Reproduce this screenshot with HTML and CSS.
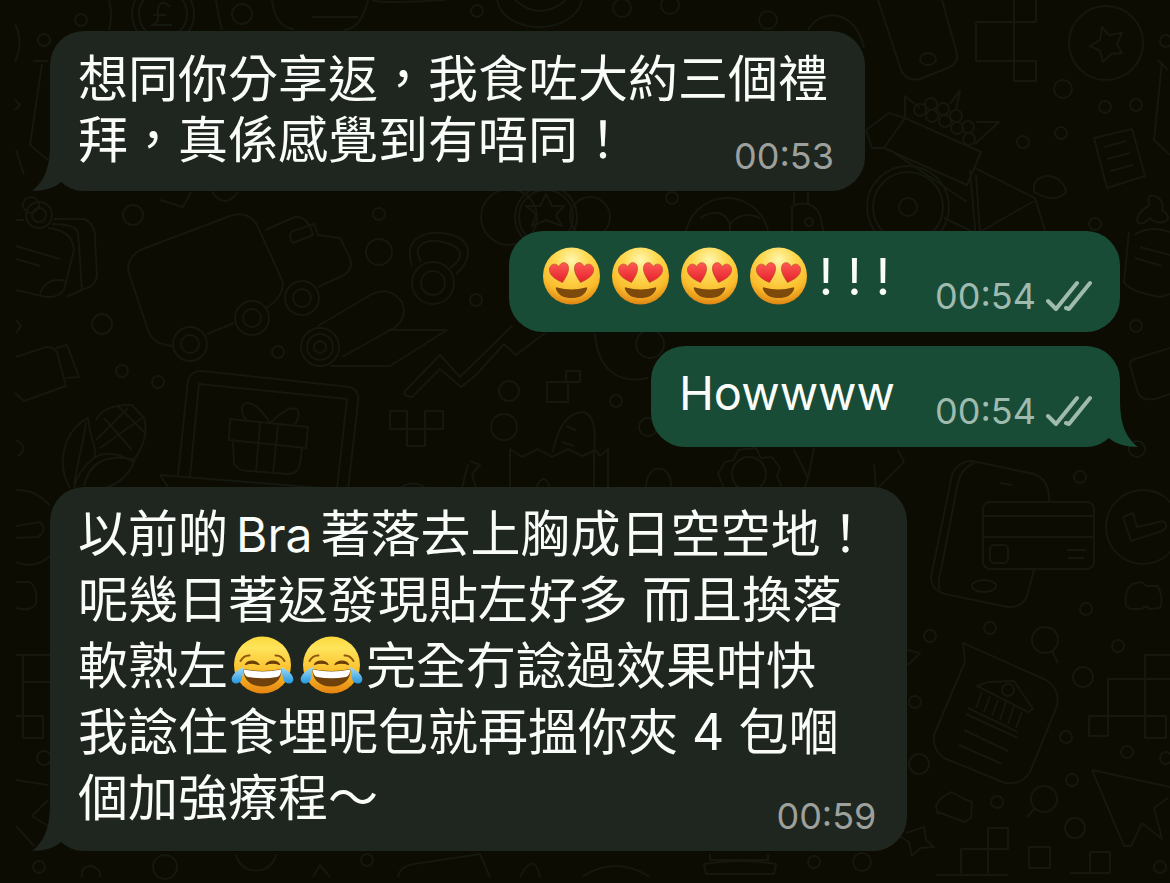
FILE: index.html
```html
<!DOCTYPE html>
<html lang="zh-Hant">
<head>
<meta charset="utf-8">
<meta name="viewport" content="width=device-width, initial-scale=1">
<title>Chat</title>
<link rel="stylesheet" href="styles.css">
</head>
<body>
<svg class="defs" width="0" height="0" aria-hidden="true">
  <defs>
    <radialGradient id="face" cx="50%" cy="22%" r="78%">
      <stop offset="0" stop-color="#fff6b0"/><stop offset=".35" stop-color="#fedb55"/><stop offset=".75" stop-color="#fabb2a"/><stop offset="1" stop-color="#dd8413"/>
    </radialGradient>
    <linearGradient id="faceJoy" x1="0" y1="0" x2="0" y2="1">
      <stop offset="0" stop-color="#fbd83c"/><stop offset=".2" stop-color="#fee45c"/><stop offset=".6" stop-color="#fbc02c"/><stop offset="1" stop-color="#e5830f"/>
    </linearGradient>
    <linearGradient id="heart" x1="0" y1="0" x2="0" y2="1">
      <stop offset="0" stop-color="#ff5a55"/><stop offset="1" stop-color="#e3202a"/>
    </linearGradient>
    <linearGradient id="tear" x1="0" y1="0" x2="0" y2="1">
      <stop offset="0" stop-color="#a5dcf5"/><stop offset="1" stop-color="#2497df"/>
    </linearGradient>
    <symbol id="emoji-love" viewBox="0 0 69 60">
      <circle cx="34.500" cy="30" r="28.500" fill="url(#face)"/>
      <path d="M25.500 36.500 C17 33 11.500 28 12.500 22.500 C13.500 17.500 19.500 16.500 22 21 C23 16 29 15 31 19.500 C33 25 29 31 25.500 36.500Z" fill="url(#heart)" stroke="#b94a24" stroke-width=".7"/>
      <path d="M43.500 36.500 C52 33 57.500 28 56.500 22.500 C55.500 17.500 49.500 16.500 47 21 C46 16 40 15 38 19.500 C36 25 40 31 43.500 36.500Z" fill="url(#heart)" stroke="#b94a24" stroke-width=".7"/>
      <path d="M20 41.500 Q34.500 45.500 49 41.500 C50 41 50.500 42 50 43.500 C47 50 42 52 34.500 52 C27 52 22 50 19 43.500 C18.500 42 19 41 20 41.500Z" fill="#7d4a0c"/>
    </symbol>
    <symbol id="emoji-joy" viewBox="0 0 69 60">
      <circle cx="34.500" cy="30" r="28.500" fill="url(#faceJoy)"/>
      <path d="M12.500 26 Q16 20 21.500 20.500 M56.500 26 Q53 20 47.500 20.500" fill="none" stroke="#8f570b" stroke-width="2" stroke-linecap="round"/>
      <path d="M17.500 29.500 C20 25 28 25 31 29.500 C27 27.800 22 27.800 17.500 29.500Z M51.500 29.500 C49 25 41 25 38 29.500 C42 27.800 47 27.800 51.500 29.500Z" fill="#6b3d06" stroke="#6b3d06" stroke-width="1.300" stroke-linejoin="round"/>
      <path d="M15.500 34 Q34.500 38 53.500 34 C54 44 47 51.500 34.500 51.500 C22 51.500 15 44 15.500 34Z" fill="#70410b"/>
      <path d="M16 34.500 Q34.500 38.500 53 34.500 Q53.500 40.500 49 42 Q34.500 44.500 20 42 Q15.500 40.500 16 34.500Z" fill="#fff"/>
      <path d="M16 32 C9 35 2 41 4 46 C6 50 12 49 13.500 45 C15 41 15 36 16 32Z M53 32 C60 35 67 41 65 46 C63 50 57 49 55.500 45 C54 41 54 36 53 32Z" fill="url(#tear)"/>
    </symbol>
    <symbol id="tail" viewBox="0 0 52 48">
      <path d="M18 0 C18 22 14 37 0 48 C11 48 23 45 29 39 L52 14 V0Z"/>
    </symbol>
    <symbol id="ticks" viewBox="0 0 46 32">
      <path d="M2 21 L10 29 L31 3 M20 28 L23 29 L44 3" fill="none" stroke="currentColor" stroke-width="4" stroke-linecap="round" stroke-linejoin="round"/>
    </symbol>
  </defs>
</svg>

<main class="chat">
  <svg class="wallpaper" viewBox="0 0 1170 883" preserveAspectRatio="xMidYMid slice" aria-hidden="true">
    <!-- coins, phone and blocks along the top -->
    <circle cx="163" cy="14" r="31"/><circle cx="163" cy="14" r="24"/><path d="M170 7 Q162 -2 158 8 V18 Q158 24 152 25 H172 M153 15 H166"/>
    <circle cx="81" cy="20" r="6"/><circle cx="44" cy="40" r="6"/><circle cx="242" cy="14" r="10"/><path d="M109 0 Q113 16 109 30 M216 0 Q218 16 222 30"/>
    <path d="M272 0 C274 18 282 28 294 29 M312 17 H358 M368 0 C364 18 356 29 344 30 M372 0 Q380 4 445 0"/>
    <circle cx="477" cy="11" r="6"/><path d="M497 0 C504 36 574 36 582 0 M515 0 Q540 22 566 0"/>
    <circle cx="622" cy="8" r="9"/><circle cx="670" cy="5" r="9"/><circle cx="768" cy="20" r="9"/><path d="M808 30 C820 8 855 8 864 48"/>
    <path d="M878 0 L901 70 Q906 82 920 79 L950 67 Q960 62 956 50 L942 0"/><ellipse cx="928" cy="59" rx="8" ry="6"/>
    <path d="M976 22 H1036 V0 M976 22 V61 H1036 V81 H1014 V0"/>
    <circle cx="1106" cy="43" r="37"/><path d="M1102 27 L1109 35 L1122 33 L1117 44 L1122 53 L1111 54 L1103 62 L1100 51 L1090 46 L1100 40Z"/>
    <circle cx="1063" cy="89" r="9"/><circle cx="1105" cy="107" r="6"/><circle cx="1136" cy="105" r="6"/><circle cx="1061" cy="133" r="6"/><circle cx="1023" cy="142" r="6"/><circle cx="1166" cy="41" r="6"/>
    <path d="M1158 60 L1168 70 M1162 62 L1154 140 L1170 155"/>
    <path d="M1094 138 L1132 129 L1145 176 L1107 188Z M1104 147 L1126 141 M1107 159 L1130 153 M1110 171 L1133 165"/>
    <!-- bicycle with a fruit basket -->
    <circle cx="908" cy="207" r="41"/><circle cx="908" cy="207" r="35"/><circle cx="908" cy="207" r="9"/>
    <path d="M905 118 L981 152 L967 185 L884 148Z M905 118 L889 113 L866 130 L872 148 L884 148 M890 150 L967 202 M975 168 L1035 198 M976 175 L980 232 L1034 201 M970 170 L976 240 M944 218 L990 240 M1035 198 L1048 240 M1034 185 C1040 170 1064 175 1066 192 C1058 202 1044 198 1034 192Z"/>
    <path d="M905 118 V96 L920 108 M950 104 L960 90 L956 110 M975 144 L999 122 L976 122"/>
    <circle cx="920" cy="110" r="6"/><circle cx="931" cy="104" r="6"/><circle cx="943" cy="109" r="6"/><circle cx="932" cy="116" r="6"/><circle cx="945" cy="121" r="6"/><circle cx="956" cy="116" r="6"/><circle cx="957" cy="128" r="6"/><circle cx="968" cy="127" r="6"/><circle cx="969" cy="139" r="6"/>
    <path d="M1150 205 C1142 190 1166 194 1162 210 C1178 220 1158 228 1150 218 C1136 232 1130 216 1150 205"/><circle cx="1095" cy="224" r="6"/>
    <!-- left edge -->
    <path d="M15 24 Q24 42 15 62 M33 61 H48 M42 64 L30 145 L48 160 M15 100 L20 105 L15 110 M16 150 L24 175"/>
    <circle cx="31" cy="205" r="8"/><circle cx="39" cy="215" r="13"/><circle cx="39" cy="215" r="7"/>
    <path d="M16 220 H24 M52 224 Q75 224 78 232 L82 290 L66 297 M54 219 H84 Q96 224 95 240 L97 275 Q96 287 80 290 M48 228 Q72 230 74 250 L64 290 Q58 298 46 297 L16 290 M16 246 L60 259 M16 259 L40 266 M40 294 Q46 276 66 281"/>
    <circle cx="133" cy="215" r="10"/><circle cx="102" cy="324" r="10"/><circle cx="122" cy="371" r="6"/><circle cx="158" cy="382" r="6"/><circle cx="278" cy="352" r="6"/>
    <path d="M16 357 L46 347 Q56 346 58 356 L66 386 L24 401 L15 393 M56 348 L67 345 L79 377 L66 378 M16 320 L21 326 L16 333 M16 440 Q30 448 18 456"/>
    <!-- lorry -->
    <path d="M160 200 L183 207 L191 192 M212 192 Q225 210 238 192"/>
    <path d="M140 250 L230 216 Q248 210 257 225 L282 280 Q286 295 266 308 M128 270 Q128 257 140 250 M128 270 L148 330 Q152 344 172 346 M207 334 L234 323 M265 230 L295 217 Q308 216 313 235 L293 243 Q286 232 296 230 L314 224 L318 235 L340 238 L350 258 Q354 270 342 276 L318 287"/>
    <circle cx="190" cy="344" r="17"/><circle cx="190" cy="344" r="9"/><circle cx="252" cy="318" r="17"/><circle cx="252" cy="318" r="9"/><circle cx="302" cy="298" r="17"/><circle cx="302" cy="298" r="9"/>
    <circle cx="379" cy="214" r="6"/><circle cx="379" cy="252" r="13"/><circle cx="476" cy="300" r="6"/>
    <circle cx="433" cy="283" r="21"/><circle cx="433" cy="283" r="12"/><path d="M412 266 C402 236 428 230 448 234 C472 239 474 258 456 274 M421 262 C410 242 430 238 446 243 C464 248 464 258 450 268"/>
    <circle cx="320" cy="347" r="19"/><circle cx="320" cy="347" r="13"/><circle cx="320" cy="347" r="6"/>
    <path d="M318 326 L372 294 Q390 286 402 302 Q408 318 394 328 L342 357 M388 330 H447 L390 366 H330"/>
    <!-- chart arrow and drinks -->
    <path d="M405 391 L440 355 L460 377 L512 326 M412 397 Q402 396 405 391 M412 397 L440 369 L461 387 L476 375 L504 344 L516 355 L545 333"/>
    <circle cx="509" cy="217" r="28"/><circle cx="546" cy="217" r="31"/><circle cx="546" cy="217" r="27"/><path d="M546 194 L552 206 H564 L556 215 L562 226 L546 220 L532 226 L536 214 L526 206 H540Z"/><circle cx="590" cy="217" r="20"/><circle cx="672" cy="198" r="6"/>
    <circle cx="727" cy="240" r="42"/><path d="M700 218 Q722 205 730 224 Q742 210 760 218 M730 224 V234 M794 192 V204 M808 192 V204 M792 206 Q812 198 820 215 L824 234 M792 206 V234"/><circle cx="809" cy="222" r="4"/>
    <!-- laptop with gift -->
    <path d="M178 475 L188 380 Q192 370 202 371 L350 387 Q360 391 358 402 L348 490 M190 477 L199 384 L347 399 L337 488 M160 475 L345 490 M160 475 L170 490"/>
    <path d="M230 419 L308 427 L306 448 L229 440Z M233 442 L234 464 Q240 472 250 471 L288 474 Q298 474 300 464 L302 448 M260 423 L256 472 M278 425 L273 474 M270 423 C250 390 234 404 246 420 M270 423 C298 396 304 412 294 426"/>
    <!-- maize -->
    <path d="M70 488 C55 462 65 430 88 418 C90 440 98 448 94 458 Q78 470 74 488 M74 485 C80 450 84 440 86 422 M84 486 Q92 450 135 460 Q126 482 105 488 M94 458 Q110 448 133 462 M96 420 Q104 404 132 405 L144 418 Q150 440 132 462 M104 418 L132 450 M118 406 L144 432 M142 418 L100 448 M128 408 L96 440"/>
    <path d="M390 411 H407 V446 H425 V411 H443 V429 H390Z"/>
    <circle cx="509" cy="391" r="10"/><circle cx="504" cy="427" r="13"/><circle cx="616" cy="401" r="6"/><circle cx="648" cy="427" r="9"/>
    <path d="M547 382 H568 V402 H547Z M566 371 H580 V382 H566Z M595 334 C598 372 620 384 648 378"/><circle cx="650" cy="344" r="14"/>
    <path d="M510 490 V449 L522 457 L538 449 L552 457 L568 449 L582 456 L596 450 L600 456 L608 449 V490 M594 450 V490 M553 452 Q560 414 582 412 Q598 414 594 452 M562 442 L574 446 M566 426 L576 430 M470 461 L480 465 L472 474 L476 488 M468 464 L462 488 M536 488 Q544 470 550 488 M646 488 C646 462 672 462 671 488 M400 488 Q415 478 428 490"/>
    <!-- cog and arrow heads -->
    <circle cx="749" cy="474" r="17"/><path d="M724 488 L718 474 L725 462 L734 460 L738 450 L756 448 L761 458 L772 457 L780 468 L777 476 L782 488 M794 450 L808 478 L814 448 M808 478 L804 490 M874 464 L876 490 L904 462 L898 450"/>
    <path d="M1129 232 L1124 282 Q1130 292 1160 297 L1170 294 M1140 247 L1170 255 M1135 258 L1162 266 M1134 235 Q1150 225 1170 232 M1130 365 Q1129 360 1138 358 L1170 348 M1130 365 L1138 393 Q1142 401 1155 399 L1170 394"/>
    <circle cx="1136" cy="326" r="6"/><circle cx="1137" cy="449" r="8"/>
    <!-- phone and bank card -->
    <path d="M931 577 L952 475 Q958 461 972 461 L1034 474 Q1050 480 1049 501 M1034 570 L1027 596 Q1022 608 1008 607 L945 594 Q931 590 931 577 M940 590 Q937 580 941 570 L958 482 Q962 468 974 463"/><ellipse cx="984" cy="586" rx="12" ry="6"/><path d="M1000 483 L1012 485"/>
    <rect x="983" y="502" width="111" height="67" rx="7"/><path d="M983 516 H1094 M983 537 H1094 M1067 550 H1086 M1068 558 H1084"/><rect x="990" y="545" width="18" height="18" rx="4"/>
    <circle cx="1143" cy="527" r="37"/><path d="M1123 517 L1133 513 L1137 527 L1163 521 Q1170 526 1162 531 L1131 541Z"/>
    <circle cx="1080" cy="477" r="6"/><circle cx="1086" cy="609" r="6"/><circle cx="990" cy="628" r="6"/><circle cx="930" cy="636" r="6"/><circle cx="1118" cy="646" r="6"/><circle cx="1083" cy="677" r="10"/>
    <path d="M1126 606 Q1124 590 1132 584 L1142 582 L1146 586 L1158 586 Q1164 600 1160 608 L1150 609 L1146 606 L1142 609 H1130Z"/>
    <circle cx="1045" cy="640" r="13"/><path d="M1052 651 L1058 663"/>
    <!-- bank letter -->
    <path d="M963 643 L1046 680 Q1060 688 1057 706 L1030 772 Q1022 785 1005 783 L944 758 Q932 750 934 735 L965 662Z M977 686 L988 682 L1014 681 L1033 709 L1028 712Z M982 692 L976 708 M990 696 L984 712 M998 700 L992 716 M1006 702 L1000 720 M1014 706 L1008 724 M1022 712 L1016 728 M968 708 L1018 732 M966 714 L1018 738 M964 730 L1008 751 M959 745 L1002 764"/><circle cx="1008" cy="690" r="6"/>
    <circle cx="915" cy="702" r="6"/><circle cx="919" cy="764" r="10"/><circle cx="1066" cy="737" r="6"/><circle cx="1127" cy="752" r="6"/><circle cx="1166" cy="758" r="6"/><circle cx="1072" cy="780" r="6"/><circle cx="997" cy="802" r="6"/><circle cx="1075" cy="828" r="10"/><circle cx="1160" cy="867" r="6"/>
    <path d="M1170 655 H1145 V738 H1166 V716 H1089 V736 H1108 V679 H1170 M907 650 L920 653 L908 665"/>
    <circle cx="1044" cy="799" r="13"/><path d="M1035 808 L1027 817 M938 815 L936 806 Q940 796 952 792 L962 798 L972 802 L971 818 L965 822 L938 812"/>
    <path d="M1092 770 L1170 787 M1092 770 L1124 846 H1131 L1142 823 L1162 839 L1154 808 L1168 798"/>
    <path d="M906 833 L924 827 L926 840 L934 847 L920 848 L912 856 L909 842 L900 836 M936 875 H1008 M961 873 V849 H1008 V828 H988 V873 M1070 873 H1110 V852 H1090 V873"/><rect x="1029" y="847" width="21" height="21"/>
    <!-- lower edges -->
    <path d="M16 490 Q38 490 50 506 M16 526 L40 522 Q48 530 38 537 L16 538 M16 562 Q34 570 50 556 M16 582 H30 Q38 588 36 604 Q30 612 16 608 M16 655 H50 M23 655 V738 H43 V716 H16 M23 682 H50 M16 780 L48 785 M48 800 L32 816 L48 826 M16 826 L34 846"/><circle cx="44" cy="758" r="7"/>
    <circle cx="39" cy="867" r="6"/><path d="M82 877 Q80 866 92 866 Q102 870 100 877 M236 854 C240 876 272 876 276 854 M313 877 L320 865 L330 877 M398 877 Q400 866 414 864 L480 854 L490 877"/><circle cx="165" cy="867" r="12"/><circle cx="367" cy="860" r="6"/>
    <path d="M520 877 Q534 850 540 877 M582 877 Q615 855 650 877 M704 864 Q740 858 776 864 L774 874 H706Z M710 854 V860 H768 V854"/><circle cx="814" cy="862" r="6"/><circle cx="862" cy="862" r="9"/>
  </svg>

  <article class="bubble bubble--in bubble--compact">
    <svg class="tail" aria-hidden="true"><use href="#tail"/></svg>
    <p class="text">想同你分享返，我食咗大約三個禮<br>拜，真係感覺到有唔同！</p>
    <footer class="meta"><time datetime="00:53">00:53</time></footer>
  </article>

  <article class="bubble bubble--out">
    <p class="text"><svg class="emoji" role="img" aria-label="smiling face with heart eyes"><use href="#emoji-love"/></svg><svg class="emoji" role="img" aria-label="smiling face with heart eyes"><use href="#emoji-love"/></svg><svg class="emoji" role="img" aria-label="smiling face with heart eyes"><use href="#emoji-love"/></svg><svg class="emoji" role="img" aria-label="smiling face with heart eyes"><use href="#emoji-love"/></svg><span class="marks">! ! !</span></p>
    <footer class="meta"><time datetime="00:54">00:54</time><svg class="ticks" role="img" aria-label="delivered"><use href="#ticks"/></svg></footer>
  </article>

  <article class="bubble bubble--out">
    <svg class="tail" aria-hidden="true"><use href="#tail"/></svg>
    <p class="text">Howwww</p>
    <footer class="meta"><time datetime="00:54">00:54</time><svg class="ticks" role="img" aria-label="delivered"><use href="#ticks"/></svg></footer>
  </article>

  <article class="bubble bubble--in">
    <svg class="tail" aria-hidden="true"><use href="#tail"/></svg>
    <p class="text">以前啲<span class="latin">Bra</span>著落去上胸成日空空地！<br>呢幾日著返發現貼左好多 而且換落<br>軟熟左<svg class="emoji" role="img" aria-label="face with tears of joy"><use href="#emoji-joy"/></svg><svg class="emoji" role="img" aria-label="face with tears of joy"><use href="#emoji-joy"/></svg>完全冇諗過效果咁快<br>我諗住食埋呢包就再搵你夾 4 包嗰<br>個加強療程～</p>
    <footer class="meta"><time datetime="00:59">00:59</time></footer>
  </article>
</main>
</body>
</html>
```
FILE: styles.css
```css
* {
  box-sizing: border-box;
}

body {
  margin: 0;
  background: #0c0c02;
  font-family: Inter, "Noto Sans CJK TC", sans-serif;
  color: #fafcfa;
}

.defs {
  position: absolute;
}

.chat {
  position: relative;
  isolation: isolate;
  display: flex;
  flex-direction: column;
  align-items: flex-start;
  min-height: 100vh;
  padding: 31px 50px 28px;
  overflow: hidden;
}

.wallpaper {
  position: absolute;
  inset: 0;
  z-index: -1;
  width: 100%;
  height: 100%;
  fill: none;
  stroke: #16170e;
  stroke-width: 2;
  stroke-linejoin: round;
}

.bubble {
  position: relative;
  isolation: isolate;
  border-radius: 34px;
}

.bubble--in {
  display: grid;
  padding: 14px 31px 14px 28px;
  background: #1f261f;
  fill: #1f261f;
}

.bubble--out {
  display: flex;
  align-items: flex-end;
  align-self: flex-end;
  gap: 40px;
  padding: 14px 28px;
  background: #184c37;
  fill: #184c37;
}

.bubble--in + .bubble--out,
.bubble--out + .bubble--in {
  margin-top: 40px;
}

.bubble--out + .bubble--out {
  margin-top: 14px;
}

.text {
  margin: 0;
  font-size: 50px;
  line-height: 66px;
  white-space: nowrap;
}

.bubble--in .text,
.bubble--in .meta {
  grid-area: 1 / 1;
}

.bubble--in .text {
  padding: 0 6px 6px 0;
}

.bubble--compact .text {
  padding-top: 4px;
  line-height: 61px;
}

.bubble--out .text {
  padding-bottom: 7px;
  font-size: 47px;
}

.marks {
  padding: 0 5px 0 6px;
  font-size: 50px;
  line-height: 1;
}

.latin {
  padding: 0 8px;
  font-size: 48px;
  line-height: 1;
}

.emoji {
  width: 69px;
  height: 60px;
  vertical-align: -11px;
}

.meta {
  display: flex;
  align-items: center;
  align-self: end;
  justify-self: end;
  gap: 10px;
  font-size: 36px;
  line-height: 42px;
  color: #9da09d;
}

.bubble--out .meta {
  padding-bottom: 1px;
  color: #9fbaae;
}

.ticks {
  width: 46px;
  height: 32px;
}

.tail {
  position: absolute;
  z-index: -1;
  bottom: 0;
  left: -18px;
  width: 52px;
  height: 48px;
}

.bubble--out .tail {
  right: -18px;
  left: auto;
  transform: scaleX(-1);
}
```
